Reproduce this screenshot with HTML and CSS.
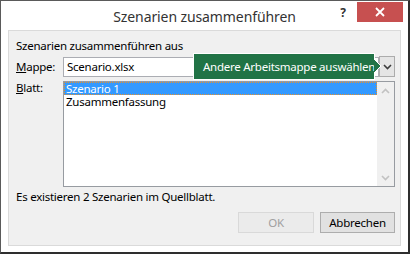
FILE: index.html
```html
<!DOCTYPE html>
<html lang="de">
<head>
<meta charset="utf-8">
<title>Szenarien zusammenführen</title>
<link rel="stylesheet" href="styles.css">
</head>
<body>
<div class="window">
  <div class="titlebar">
    <div class="title">Szenarien zusammenführen</div>
    <div class="controls">
      <span class="help">?</span>
      <span class="close">
        <svg width="10" height="10" viewBox="0 0 10 10"><path d="M1 1L9 9M9 1L1 9" stroke="#fff" stroke-width="1.8"/></svg>
      </span>
    </div>
  </div>
  <div class="panel">
    <div class="group-label">Szenarien zusammenführen aus</div>
    <div class="row row-mappe">
      <div class="label"><u>M</u>appe:</div>
      <div class="input">Scenario.xlsx</div>
      <div class="dropbtn">
        <svg width="9" height="6" viewBox="0 0 9 6"><path d="M1 1L4.5 4.5L8 1" fill="none" stroke="#3c3c3c" stroke-width="1.6"/></svg>
      </div>
      <div class="tooltip">
        <span>Andere Arbeitsmappe auswählen</span>
        <svg class="tip-arrow" width="8" height="16" viewBox="0 0 8 16"><path d="M0 1L7 8L0 15Z" fill="#217346" stroke="#fff" stroke-width="1"/><rect x="0" y="2" width="1" height="12" fill="#217346"/></svg>
      </div>
    </div>
    <div class="row row-blatt">
      <div class="label label-top"><u>B</u>latt:</div>
      <div class="listbox">
        <div class="items">
          <div class="item selected">Szenario 1</div>
          <div class="item">Zusammenfassung</div>
        </div>
        <div class="scrollbar">
          <div class="sb-btn">
            <svg width="9" height="6" viewBox="0 0 9 6"><path d="M1 5L4.5 1.5L8 5" fill="none" stroke="#c2c2c2" stroke-width="1.6"/></svg>
          </div>
          <div class="sb-btn">
            <svg width="9" height="6" viewBox="0 0 9 6"><path d="M1 1L4.5 4.5L8 1" fill="none" stroke="#c2c2c2" stroke-width="1.6"/></svg>
          </div>
        </div>
      </div>
    </div>
    <div class="status">Es existieren 2 Szenarien im Quellblatt.</div>
    <div class="buttons">
      <div class="btn btn-disabled">OK</div>
      <div class="btn">Abbrechen</div>
    </div>
  </div>
</div>
</body>
</html>
```
FILE: styles.css
```css
html, body {
  margin: 0;
  padding: 0;
  background: #fff;
}
.window {
  width: 410px;
  height: 254px;
  box-sizing: border-box;
  border: 1px solid #5a5a5a;
  border-right: 2px solid #2e2e2e;
  border-bottom: 2px solid #2e2e2e;
  background: #fff;
  display: flex;
  flex-direction: column;
  font-family: "Noto Sans", "Open Sans", sans-serif;
  font-size: 11.5px;
  letter-spacing: -0.25px;
  color: #000;
}
.titlebar {
  position: relative;
  height: 29px;
  display: flex;
  justify-content: center;
  align-items: flex-start;
}
.title {
  font-size: 14px;
  letter-spacing: -0.1px;
  line-height: 20px;
  padding-top: 6px;
  color: #333;
  white-space: nowrap;
}
.controls {
  position: absolute;
  right: 5px;
  top: 0;
  display: flex;
  align-items: flex-start;
}
.help {
  font-weight: bold;
  font-size: 12px;
  letter-spacing: 0;
  line-height: 14px;
  margin-top: 5px;
  color: #333;
  margin-right: 11px;
}
.close {
  width: 46px;
  height: 20px;
  margin-top: 1px;
  background: #c75050;
  display: flex;
  align-items: center;
  justify-content: center;
}
.close svg { display: block; }
.panel {
  margin: 0 7px 6px 7px;
  height: 216px;
  box-sizing: border-box;
  border: 1px solid #dadada;
  background: #f0f0f0;
  padding: 0 5px 0 7px;
  display: flex;
  flex-direction: column;
}
.group-label {
  margin-top: 7px;
  line-height: 16px;
  white-space: nowrap;
}
.row {
  display: flex;
  position: relative;
}
.row-mappe {
  margin-top: 2px;
  height: 21px;
}
.label {
  width: 47px;
  flex: none;
  line-height: 21px;
}
.label-top {
  line-height: 14px;
}
.input {
  width: 316px;
  height: 20px;
  margin-top: 1px;
  box-sizing: border-box;
  border: 1px solid #abadb3;
  background: #fff;
  padding-left: 3px;
  line-height: 17px;
  flex: none;
}
.dropbtn {
  width: 16px;
  height: 21px;
  box-sizing: border-box;
  border: 1px solid #acacac;
  background: #e5e5e5;
  display: flex;
  align-items: center;
  justify-content: center;
  flex: none;
}
.dropbtn svg { display: block; }
.tooltip {
  position: absolute;
  left: 177px;
  top: -3px;
  width: 182px;
  height: 27px;
  box-sizing: border-box;
  border: 1px solid #fff;
  background: #217346;
  color: #fff;
  padding-left: 9px;
  line-height: 25px;
  white-space: nowrap;
}
.tip-arrow {
  position: absolute;
  right: -8px;
  top: 4px;
  display: block;
}
.row-blatt {
  margin-top: 4px;
  height: 106px;
}
.listbox {
  width: 332px;
  height: 106px;
  box-sizing: border-box;
  border: 1px solid #979ba1;
  background: #fff;
  display: flex;
}
.items {
  flex: 1;
}
.item {
  height: 13px;
  line-height: 13px;
  padding-left: 2px;
  white-space: nowrap;
}
.item.selected {
  background: #3399ff;
  color: #fff;
  outline: 1px dotted #e8902a;
  outline-offset: -1px;
}
.scrollbar {
  width: 17px;
  background: #f0f0f0;
  display: flex;
  flex-direction: column;
  justify-content: space-between;
}
.sb-btn {
  height: 17px;
  display: flex;
  align-items: center;
  justify-content: center;
}
.sb-btn svg { display: block; }
.status {
  margin-top: 2px;
  line-height: 16px;
  white-space: nowrap;
}
.buttons {
  margin-top: 7px;
  display: flex;
  justify-content: flex-end;
  gap: 6px;
}
.btn {
  width: 75px;
  height: 21px;
  box-sizing: border-box;
  border: 1px solid #adadad;
  background: #e1e1e1;
  text-align: center;
  line-height: 19px;
}
.btn-disabled {
  width: 76px;
  border-color: #d9d9d9;
  background: #ebebeb;
  color: #a0a0a0;
}
```
